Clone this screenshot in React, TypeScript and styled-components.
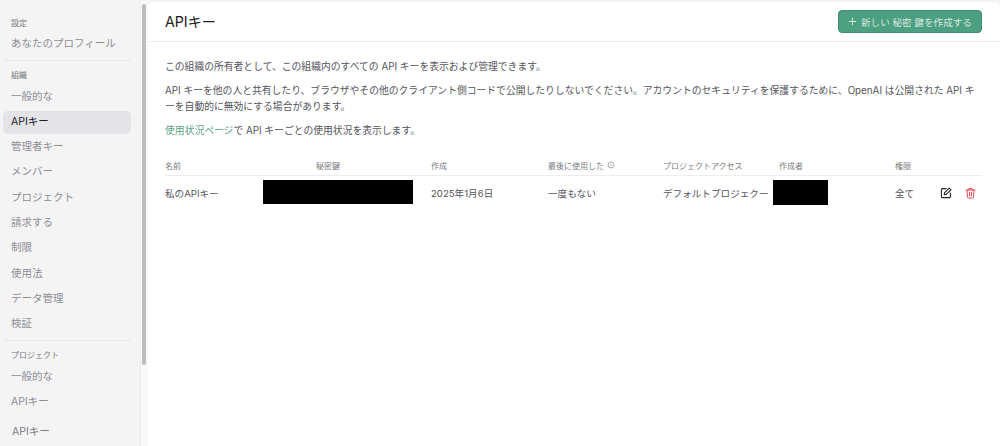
import React from 'react'
import styled, { createGlobalStyle } from 'styled-components'
import { Plus } from 'lucide-react'

const GlobalStyle = createGlobalStyle`
  html, body {
    margin: 0;
    padding: 0;
    height: 100%;
    overflow: hidden;
    background: #f4f4f5;
    font-family: Inter, "Noto Sans CJK JP", sans-serif;
  }
`

const Page = styled.div`
  display: flex;
  width: 1000px;
  height: 446px;
  overflow: hidden;
  background: #f4f4f5;
`
const Sidebar = styled.aside`
  position: relative;
  width: 148px;
  flex: none;
  display: flex;
  flex-direction: column;
  padding: 15px 0 0 3px;
  box-sizing: border-box;
`
const ScrollTrack = styled.div`
  position: absolute;
  left: 140px;
  top: 0;
  bottom: 0;
  width: 8px;
  box-sizing: border-box;
  border-left: 1px solid #ededef;
  background: #f8f8f9;
`
const Scrollbar = styled.div`
  position: absolute;
  left: 1px;
  top: 4px;
  width: 4px;
  height: 361px;
  border-radius: 2px;
  background: #bdbdbf;
`
const SectionLabel = styled.div`
  height: 16px;
  line-height: 16px;
  padding-left: 8px;
  font-size: 8px;
  color: #77777c;
`
const NavItem = styled.div<{ $active?: boolean }>`
  width: 128px;
  height: 23px;
  margin-top: 2.3px;
  padding-left: 8px;
  box-sizing: border-box;
  line-height: 22px;
  font-size: 10.5px;
  border-radius: 5px;
  color: ${p => (p.$active ? '#202123' : '#8e8e94')};
  background: ${p => (p.$active ? '#e3e3e8' : 'transparent')};
`
const Divider = styled.div`
  width: 128px;
  height: 1px;
  margin: 4px 0 6px;
  background: #e8e8ea;
`
const BottomItem = styled.div`
  position: absolute;
  left: 0;
  width: 141px;
  top: 417px;
  height: 29px;
  box-sizing: border-box;
  padding-left: 12px;
  line-height: 29px;
  font-size: 10.5px;
  color: #7d7d83;
  background: #f4f4f5;
  border-right: 1px solid #ededef;
`
const Main = styled.main`
  flex: 1;
  margin-top: 2px;
  background: #fff;
  border-top-left-radius: 6px;
  border-top-right-radius: 6px;
  display: flex;
  flex-direction: column;
`
const Header = styled.header`
  height: 39px;
  flex: none;
  display: flex;
  align-items: center;
  justify-content: space-between;
  padding: 0 18px 0 17px;
  border-bottom: 1px solid #ececf1;
`
const Title = styled.h1`
  margin: 0 0 2px;
  font-size: 14.2px;
  font-weight: 400;
  color: #202123;
`
const CreateButton = styled.button`
  display: flex;
  align-items: center;
  gap: 3px;
  height: 23px;
  width: 144px;
  padding: 0 0 0 8px;
  box-sizing: border-box;
  border: 1px solid #3f9070;
  border-radius: 4px;
  background: #4c9f80;
  color: #d8e9e2;
  font-family: inherit;
  font-size: 9.6px;
  white-space: nowrap;
  svg {
    color: #eef6f2;
  }
`
const Content = styled.div`
  padding: 17px 18px 0 17px;
`
const Paragraph = styled.p`
  margin: 0 0 8px;
  font-size: 9.8px;
  line-height: 16px;
  color: #54545c;
`
const Accent = styled.span`
  color: #5aa588;
`
const TableGrid = styled.div`
  display: grid;
  grid-template-columns: 98px 168px 117px 115px 110px 122px 45px 42px;
  margin-top: 20px;
`
const HeadCell = styled.div<{ $inset?: number }>`
  height: 17px;
  box-sizing: border-box;
  line-height: 15px;
  padding-left: ${p => p.$inset ?? 0}px;
  display: flex;
  align-items: flex-start;
  gap: 3px;
  font-size: 8px;
  color: #7b7b83;
  border-bottom: 1px solid #ececf1;
`
const Cell = styled.div`
  height: 33px;
  display: flex;
  align-items: center;
  font-size: 9.6px;
  color: #54545c;
  white-space: nowrap;
  overflow: hidden;
`
const Redacted = styled.div<{ $w: number; $h: number }>`
  width: ${p => p.$w}px;
  height: ${p => p.$h}px;
  background: #000;
  margin-bottom: 1px;
`
const Actions = styled(Cell)`
  gap: 13px;
`
const InfoIcon = () => (
  <svg width="8" height="8" viewBox="0 0 8 8" fill="none" stroke="#8a8a90" strokeWidth="0.7" style={{ marginTop: 2 }}>
    <circle cx="4" cy="4" r="3" />
    <path d="M4 3.6v1.8M4 2.4v.4" />
  </svg>
)
const EditIcon = () => (
  <svg width="12" height="12" viewBox="0 0 12 12" fill="none" stroke="#202123" strokeWidth="1.1" strokeLinecap="round" strokeLinejoin="round">
    <path d="M6 1.6H2.6a1.2 1.2 0 0 0-1.2 1.2v6.6a1.2 1.2 0 0 0 1.2 1.2h6.6a1.2 1.2 0 0 0 1.2-1.2V6" />
    <path d="M9.2 1.1l1.7 1.7-4.6 4.6-2.1.4.4-2.1z" />
  </svg>
)
const TrashIcon = () => (
  <svg width="11" height="12" viewBox="0 0 11 12" fill="none" stroke="#e5484d" strokeWidth="1" strokeLinecap="round" strokeLinejoin="round">
    <path d="M1 3h9M3.8 3V1.6h3.4V3M2 3l.5 7.2a1 1 0 0 0 1 .8h4a1 1 0 0 0 1-.8L9 3M4.5 5.2v3.6M6.5 5.2v3.6" />
  </svg>
)

const orgItems = ['一般的な', 'APIキー', '管理者キー', 'メンバー', 'プロジェクト', '請求する', '制限', '使用法', 'データ管理', '検証']

export default function App() {
  return (
    <Page>
      <GlobalStyle />
      <Sidebar>
        <SectionLabel>設定</SectionLabel>
        <NavItem>あなたのプロフィール</NavItem>
        <Divider />
        <SectionLabel>組織</SectionLabel>
        {orgItems.map(item => (
          <NavItem key={item} $active={item === 'APIキー'}>{item}</NavItem>
        ))}
        <Divider />
        <SectionLabel>プロジェクト</SectionLabel>
        <NavItem>一般的な</NavItem>
        <NavItem>APIキー</NavItem>
        <ScrollTrack><Scrollbar /></ScrollTrack>
        <BottomItem>APIキー</BottomItem>
      </Sidebar>
      <Main>
        <Header>
          <Title>APIキー</Title>
          <CreateButton><Plus size={11} strokeWidth={2} />新しい 秘密 鍵を作成する</CreateButton>
        </Header>
        <Content>
          <Paragraph>この組織の所有者として、この組織内のすべての API キーを表示および管理できます。</Paragraph>
          <Paragraph>API キーを他の人と共有したり、ブラウザやその他のクライアント側コードで公開したりしないでください。アカウントのセキュリティを保護するために、OpenAI は公開された API キーを自動的に無効にする場合があります。</Paragraph>
          <Paragraph><Accent>使用状況ページ</Accent>で API キーごとの使用状況を表示します。</Paragraph>
          <TableGrid>
            <HeadCell>名前</HeadCell>
            <HeadCell $inset={53}>秘密鍵</HeadCell>
            <HeadCell>作成</HeadCell>
            <HeadCell>最後に使用した<InfoIcon /></HeadCell>
            <HeadCell>プロジェクトアクセス</HeadCell>
            <HeadCell $inset={6}>作成者</HeadCell>
            <HeadCell>権限</HeadCell>
            <HeadCell />
            <Cell>私のAPIキー</Cell>
            <Cell><Redacted $w={150} $h={24} /></Cell>
            <Cell>2025年1月6日</Cell>
            <Cell>一度もない</Cell>
            <Cell>デフォルトプロジェクー</Cell>
            <Cell><Redacted $w={55} $h={25} /></Cell>
            <Cell>全て</Cell>
            <Actions><EditIcon /><TrashIcon /></Actions>
          </TableGrid>
        </Content>
      </Main>
    </Page>
  )
}
